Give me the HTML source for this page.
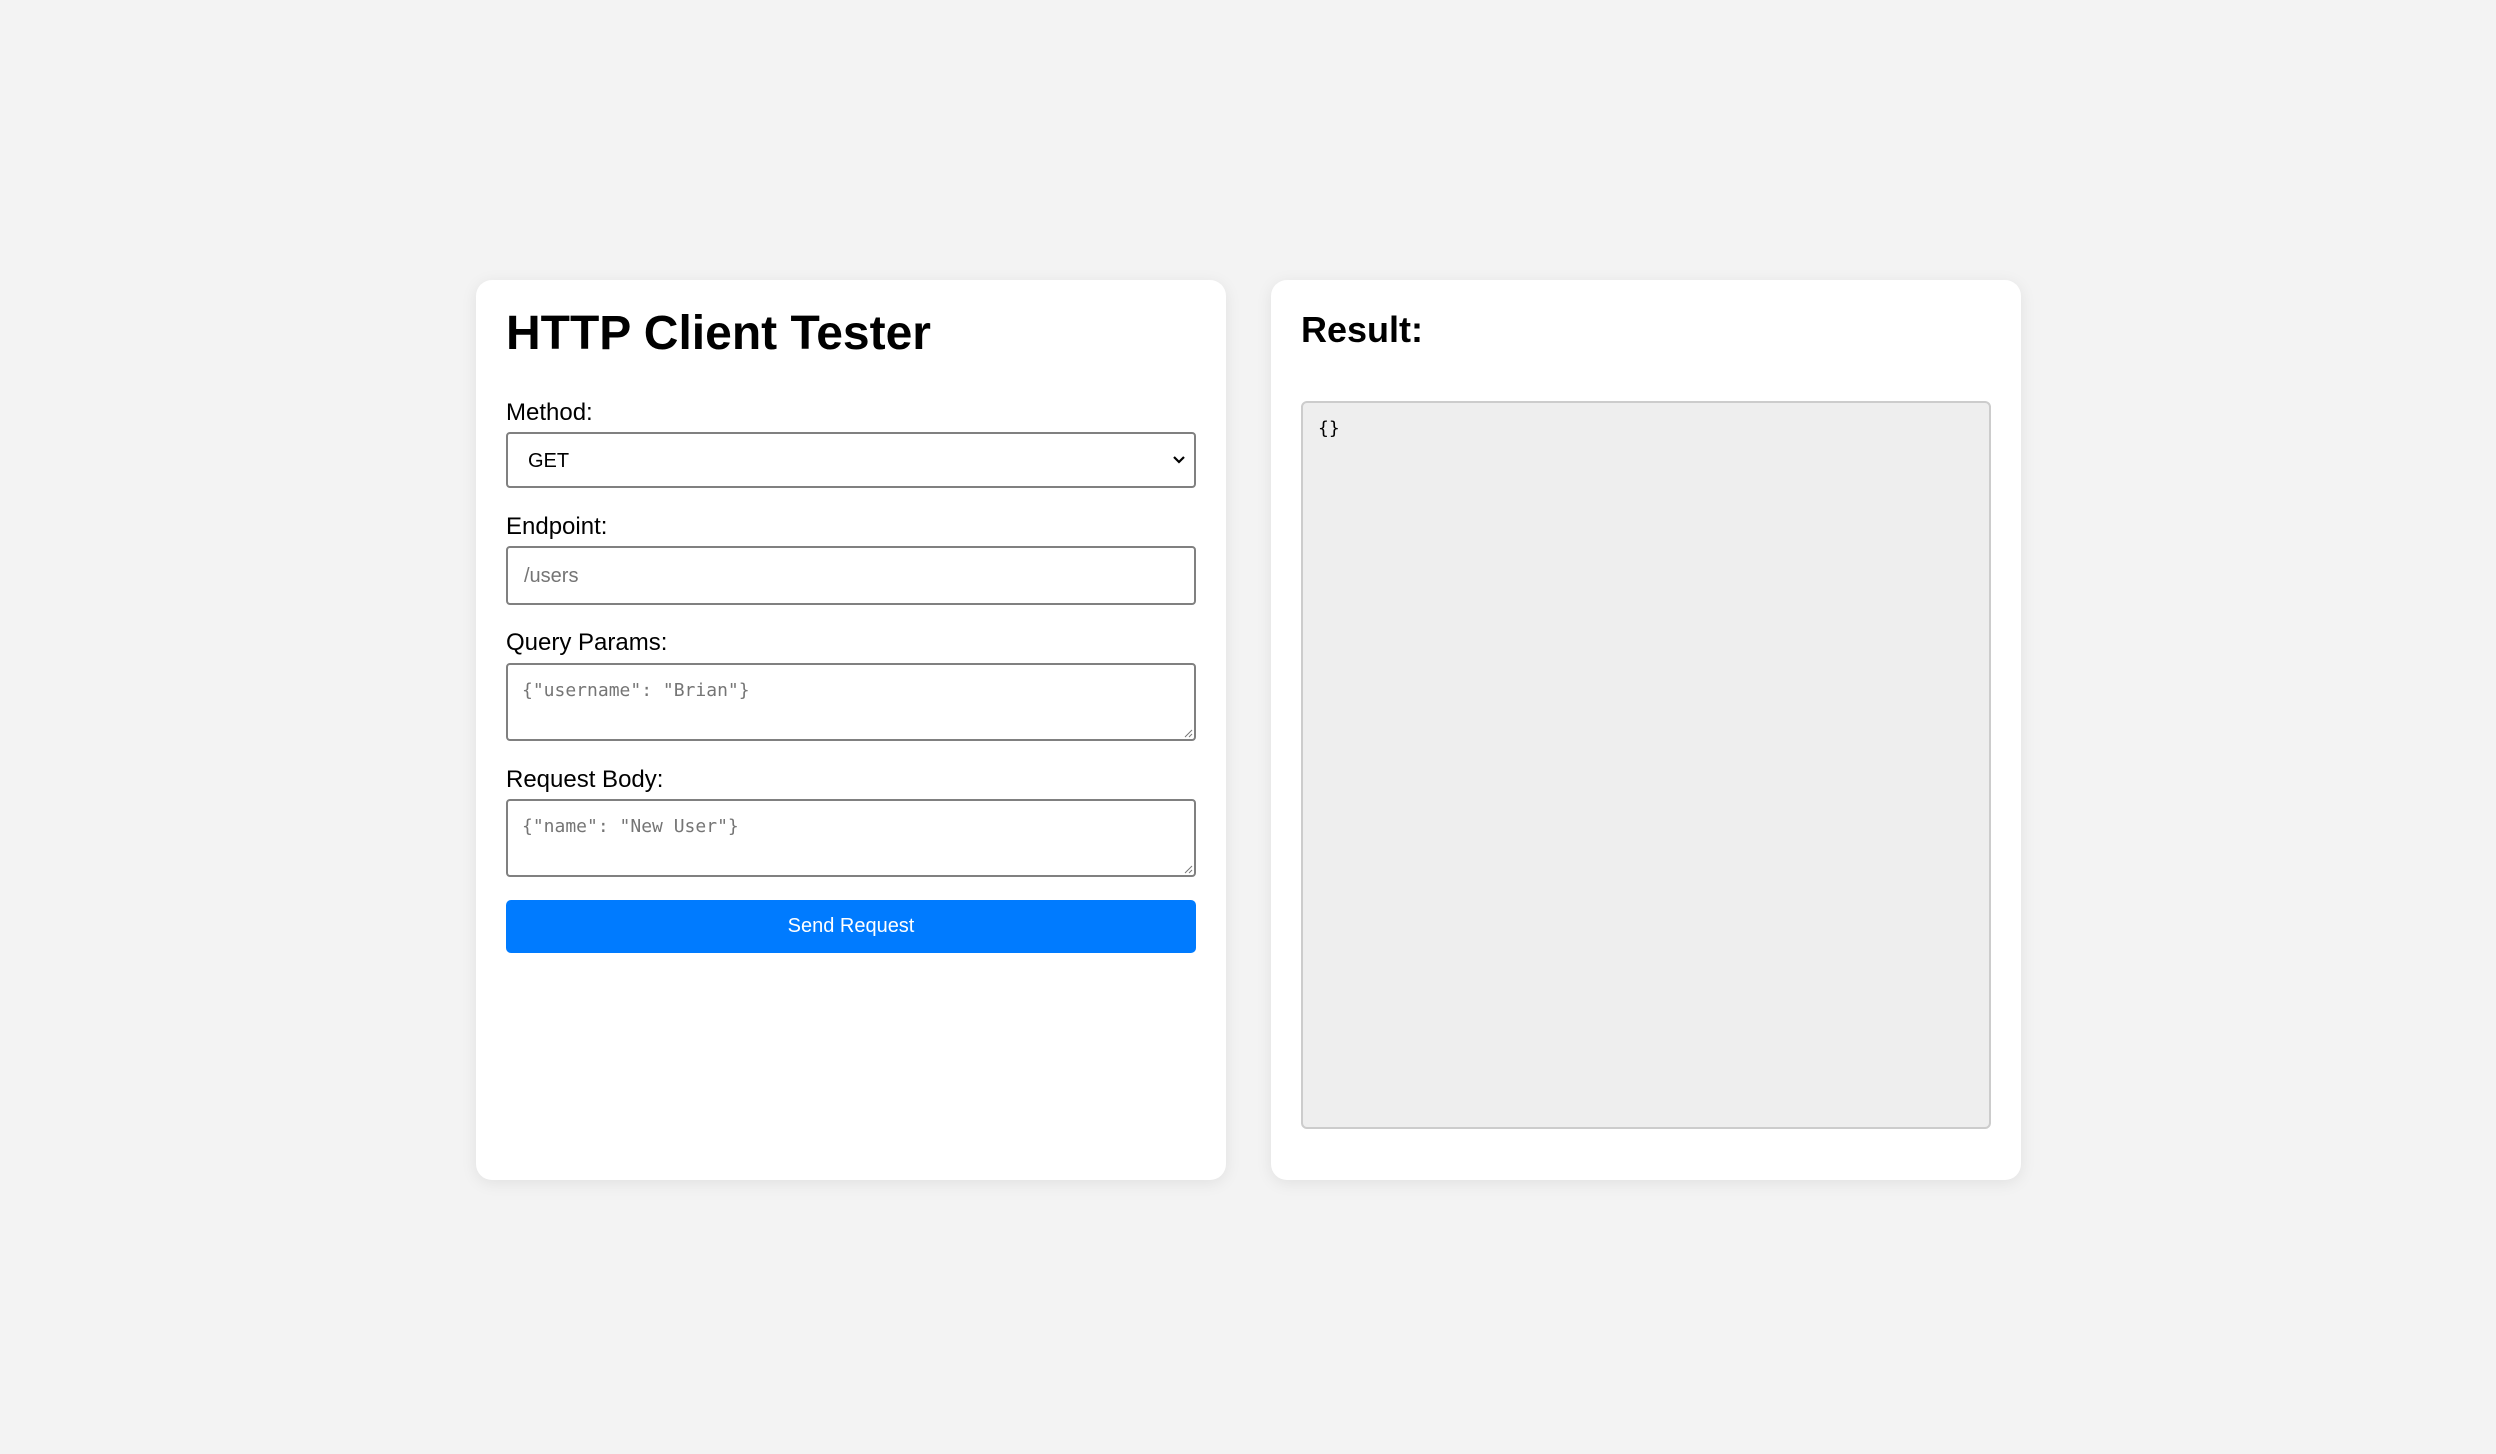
<!DOCTYPE html>
<html><head><meta charset="utf-8"><style>
html,body{margin:0;padding:0;}
body{width:2496px;height:1454px;background:#f3f3f3;position:relative;overflow:hidden;font-family:"Liberation Sans",Arial,sans-serif;color:#000;}
.card{position:absolute;top:280px;height:900px;width:750px;background:#fff;border-radius:16px;box-shadow:0 3px 16px rgba(0,0,0,0.08);}
.abs{position:absolute;}
.lbl{position:absolute;left:30px;font-size:24px;line-height:25px;}
.box{position:absolute;left:30px;width:690px;border:2px solid #808080;border-radius:4px;box-sizing:border-box;background:#fff;}
.mono{font-family:"DejaVu Sans Mono","Liberation Mono",monospace;font-size:18px;color:#757575;}
</style></head><body>
<div class="card" style="left:476px;">
  <div class="abs" style="left:30px;top:29px;font-size:48px;font-weight:bold;line-height:50px;">HTTP Client Tester</div>
  <div class="lbl" style="top:120px;">Method:</div>
  <div class="box" style="top:152px;height:56px;">
    <span class="abs" style="left:20px;top:16px;font-size:20px;">GET</span>
    <svg class="abs" style="right:8px;top:21px" width="14" height="10" viewBox="0 0 14 10"><path d="M2 2 L7 7 L12 2" fill="none" stroke="#000" stroke-width="2.2"/></svg>
  </div>
  <div class="lbl" style="top:234px;">Endpoint:</div>
  <div class="box" style="top:266px;height:59px;">
    <span class="abs" style="left:16px;top:17px;font-size:20px;color:#757575;">/users</span>
  </div>
  <div class="lbl" style="top:350px;">Query Params:</div>
  <div class="box" style="top:383px;height:78px;">
    <span class="abs mono" style="left:14px;top:15px;">{"username": "Brian"}</span>
    <svg class="abs" style="right:1px;bottom:1px" width="10" height="10"><path d="M9 2 L2 9 M9 6 L6 9" stroke="#777" stroke-width="1"/></svg>
  </div>
  <div class="lbl" style="top:487px;">Request Body:</div>
  <div class="box" style="top:519px;height:78px;">
    <span class="abs mono" style="left:14px;top:15px;">{"name": "New User"}</span>
    <svg class="abs" style="right:1px;bottom:1px" width="10" height="10"><path d="M9 2 L2 9 M9 6 L6 9" stroke="#777" stroke-width="1"/></svg>
  </div>
  <div class="abs" style="left:30px;top:620px;width:690px;height:53px;background:#007bff;border-radius:5px;color:#fff;font-size:20px;line-height:53px;text-align:center;">Send Request</div>
</div>
<div class="card" style="left:1271px;">
  <div class="abs" style="left:30px;top:30px;font-size:36px;font-weight:bold;line-height:40px;">Result:</div>
  <div class="abs" style="left:30px;top:121px;width:690px;height:728px;background:#eee;border:2px solid #ccc;border-radius:6px;box-sizing:border-box;">
    <span class="abs" style="left:15px;top:15px;font-family:'DejaVu Sans Mono','Liberation Mono',monospace;font-size:18px;">{}</span>
  </div>
</div>
</body></html>
